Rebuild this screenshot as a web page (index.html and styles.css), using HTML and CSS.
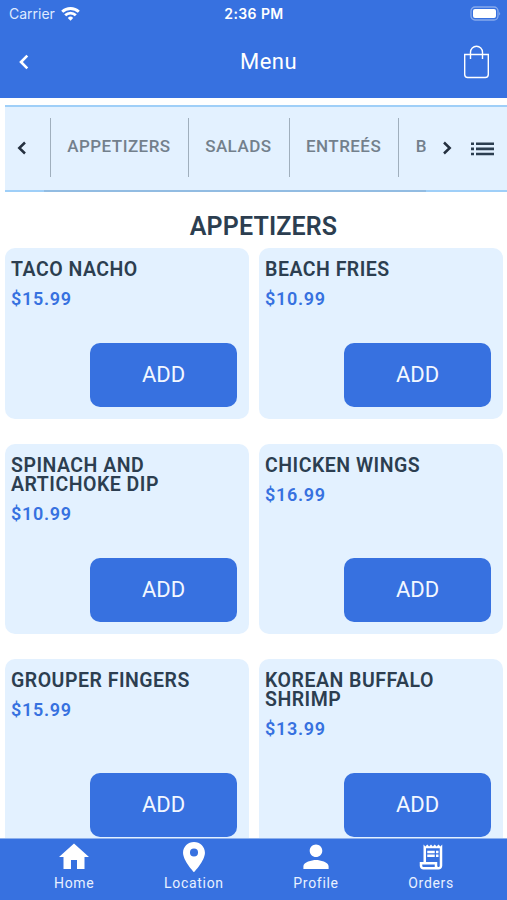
FILE: index.html
```html
<!doctype html>
<html lang="en">
<head>
<meta charset="utf-8">
<title>Menu</title>
<link rel="stylesheet" href="styles.css">
</head>

<body>
<div class="app">
    <header class="header">
        <div class="status">
            <div class="carrier">
                <span>Carrier</span>
                <svg width="19" height="14" viewBox="0 0 19 14" fill="none" stroke="#fff" stroke-width="2.9">
                    <path d="M1.200 4.800a12 12 0 0 1 16.600 0"/>
                    <path d="M4.200 8.200a7.700 7.700 0 0 1 10.600 0"/>
                    <path d="M9.500 13.800l-2.700-2.900a3.800 3.800 0 0 1 5.400 0z" fill="#fff" stroke="none"/>
                </svg>
            </div>
            <div class="time">2:36 PM</div>
            <div class="battery">
                <svg width="31" height="15" viewBox="0 0 31 15">
                    <rect x="1" y="1" width="27" height="13" rx="4" fill="none" stroke="#fff" stroke-opacity=".4" stroke-width="1.3"/>
                    <rect x="3" y="3" width="23" height="9" rx="2" fill="#fff"/>
                    <path d="M29.3 5.5q1.5 2 0 4z" fill="#fff" opacity=".5"/>
                </svg>
            </div>
        </div>
        <div class="bar">
            <svg class="back" width="10" height="16" viewBox="0 0 10 16" fill="none" stroke="#fff" stroke-width="2.6"><path d="M8.3 1.7L2 8l6.3 6.3"/></svg>
            <h1>Menu</h1>
            <svg class="bag" width="27" height="34" viewBox="0 0 27 34" fill="none" stroke="#fff" stroke-width="1.4">
                <path d="M1.700 9.500h23.600v20q0 3-3 3H4.700q-3 0-3-3z"/>
                <path d="M7.500 14V7.300a6 6 0 0 1 12 0V14"/>
            </svg>
        </div>
    </header>

    <div class="tabs">
        <div class="arrow arrow-left"><svg width="10" height="14" viewBox="0 0 10 14"><path d="M8 1.500L2.300 7 8 12.500"/></svg></div>
        <ul class="tab-list">
            <li>APPETIZERS</li>
            <li>SALADS</li>
            <li>ENTREÉS</li>
            <li>B</li>
        </ul>
        <div class="arrow arrow-right"><svg width="10" height="14" viewBox="0 0 10 14"><path d="M2 1.500L7.700 7 2 12.500"/></svg></div>
        <svg class="list-icon" width="23" height="14" viewBox="0 0 23 14" fill="#2c3e50">
            <path d="M0 .5h3v2.600H0zM5 .5h18v2.600H5zM0 5.600h3v2.600H0zM5 5.600h18v2.600H5zM0 10.700h3v2.600H0zM5 10.700h18v2.600H5z"/>
        </svg>
    </div>

    <main class="content">
        <h2>APPETIZERS</h2>
        <div class="grid">
            <div class="card">
                <h3>TACO NACHO</h3>
                <p class="price">$15.99</p>
                <button class="add">ADD</button>
            </div>
            <div class="card">
                <h3>BEACH FRIES</h3>
                <p class="price">$10.99</p>
                <button class="add">ADD</button>
            </div>
            <div class="card">
                <h3>SPINACH AND ARTICHOKE DIP</h3>
                <p class="price">$10.99</p>
                <button class="add">ADD</button>
            </div>
            <div class="card">
                <h3>CHICKEN WINGS</h3>
                <p class="price">$16.99</p>
                <button class="add">ADD</button>
            </div>
            <div class="card">
                <h3>GROUPER FINGERS</h3>
                <p class="price">$15.99</p>
                <button class="add">ADD</button>
            </div>
            <div class="card">
                <h3>KOREAN BUFFALO SHRIMP</h3>
                <p class="price">$13.99</p>
                <button class="add">ADD</button>
            </div>
        </div>
    </main>

    <nav class="bottom-nav">
        <a class="nav-item">
            <svg width="36" height="36" viewBox="0 0 24 24"><path d="M10 20v-6h4v6h5v-8h3L12 3 2 12h3v8z"/></svg>
            <span>Home</span>
        </a>
        <a class="nav-item">
            <svg width="36" height="36" viewBox="0 0 24 24"><path d="M12 2C8 2 4.700 5.100 4.700 9.200 4.700 14.500 12 22.200 12 22.200s7.300-7.700 7.300-13C19.300 5.100 16 2 12 2zm0 9.700a2.700 2.700 0 1 1 0-5.400 2.700 2.700 0 0 1 0 5.400z"/></svg>
            <span>Location</span>
        </a>
        <a class="nav-item">
            <svg width="36" height="36" viewBox="0 0 24 24"><path d="M12 12c2.300 0 4.200-1.900 4.200-4.200S14.300 3.600 12 3.600 7.800 5.500 7.800 7.800 9.700 12 12 12zm0 2c-2.800 0-8.400 1.400-8.400 4.200V20h16.800v-1.800c0-2.800-5.600-4.200-8.400-4.200z"/></svg>
            <span>Profile</span>
        </a>
        <a class="nav-item">
            <svg class="receipt" width="30" height="30" viewBox="0 0 24 24"><path d="M19.500 3.500L18 2l-1.500 1.500L15 2l-1.500 1.500L12 2l-1.500 1.500L9 2 7.500 3.500 6 2v14H3v3c0 1.660 1.340 3 3 3h12c1.660 0 3-1.340 3-3V2l-1.500 1.500zM15 20H6c-.55 0-1-.45-1-1v-1h10v2zm4-1c0 .55-.45 1-1 1s-1-.45-1-1v-3H8V5h11v14zM9 7h6v2H9zM16 7h2v2h-2zM9 10h6v2H9zM16 10h2v2h-2z"/></svg>
            <span>Orders</span>
        </a>
    </nav>
</div>
</body>
</html>
```

FILE: styles.css
```css
*{
    box-sizing:border-box;
    }
body{
    margin:0;
    background:#fff;
    font-family:Roboto, "Liberation Sans", sans-serif;
    color:#2c3e50;
    }
h1,h2,h3,p,ul{
    margin:0;
    padding:0;
    }
svg{
    display:block;
    flex:none;
    }
.app{
    height:900px;
    display:flex;
    flex-direction:column;
    overflow:hidden;
    }

/* header */
.header{
    flex:none;
    height:98px;
    background:#3771e0;
    color:#fff;
    }
.status{
    height:27px;
    display:grid;
    grid-template-columns:1fr auto 1fr;
    align-items:center;
    padding:0 6px 0 9px;
    font-family:Inter, sans-serif;
    font-size:14px;
    }
.carrier{
    display:flex;
    align-items:center;
    gap:6px;
    color:#dfeaff;
    }
.time{
    padding-right:2px;
    font-weight:600;
    letter-spacing:.4px;
    }
.battery{
    justify-self:end;
    }
.bar{
    height:70px;
    display:grid;
    grid-template-columns:221px 1fr auto;
    align-items:center;
    padding:0 17px 0 19px;
    }
.bar h1{
    padding-bottom:2px;
    font-size:22px;
    font-weight:400;
    letter-spacing:.5px;
    }

/* categories */
.tabs{
    flex:none;
    height:87px;
    margin:7px 0 0 5px;
    display:flex;
    align-items:stretch;
    background:#e3f1ff;
    border-top:2px solid #9fcff8;
    box-shadow:inset 0 -2px #9fcff8;
    }
.arrow{
    display:flex;
    align-items:center;
    justify-content:center;
    padding-bottom:3px;
    fill:none;
    stroke:#24303f;
    stroke-width:2.5;
    }
.arrow-left{
    width:39px;
    padding-right:5px;
    }
.arrow-right{
    width:43px;
    padding-right:2px;
    }
.tab-list{
    width:382px;
    padding:11px 0 13px 6px;
    display:flex;
    overflow:hidden;
    list-style:none;
    border-bottom:2px solid #92bce2;
    }
.tab-list li{
    flex:none;
    padding:0 17.3px 0 16.3px;
    border-left:1px solid #a0afbd;
    line-height:57px;
    font-size:17px;
    font-weight:500;
    letter-spacing:.45px;
    color:#73808c;
    }
.list-icon{
    align-self:center;
    margin:0 0 2px 2px;
    }

/* menu items */
.content{
    flex:1;
    min-height:0;
    overflow:hidden;
    padding:18px 4px 0 5px;
    }
.content h2{
    padding-left:19px;
    text-align:center;
    font-size:25px;
    line-height:33px;
    font-weight:600;
    letter-spacing:.15px;
    margin-bottom:5px;
    }
.grid{
    display:grid;
    grid-template-columns:1fr 1fr;
    gap:25px 10px;
    }
.card{
    display:flex;
    flex-direction:column;
    background:#e3f1ff;
    border-radius:10px;
    padding:12px 12px 12px 6px;
    }
.card h3{
    font-size:19.5px;
    line-height:19.5px;
    font-weight:600;
    letter-spacing:.5px;
    padding-right:30px;
    }
.price{
    margin:9.5px 0 34px;
    font-size:18px;
    line-height:20px;
    font-weight:600;
    letter-spacing:.7px;
    color:#3771e0;
    }
.add{
    width:147px;
    height:63.5px;
    margin:auto 0 0 auto;
    padding:0;
    border:0;
    border-radius:10px;
    background:#3771e0;
    color:#f2f7ff;
    font-family:inherit;
    font-size:22px;
    }

/* bottom navigation */
.bottom-nav{
    flex:none;
    height:62px;
    display:flex;
    justify-content:space-between;
    padding:0 53px 0 54px;
    background:#3771e0;
    border-top:1px solid #8db0ed;
    color:#e8f0ff;
    }
.nav-item{
    display:flex;
    flex-direction:column;
    align-items:center;
    font-size:14px;
    line-height:16px;
    letter-spacing:.7px;
    }
.nav-item svg{
    fill:#fff;
    }
.nav-item .receipt{
    margin:3px 0;
    }
```
